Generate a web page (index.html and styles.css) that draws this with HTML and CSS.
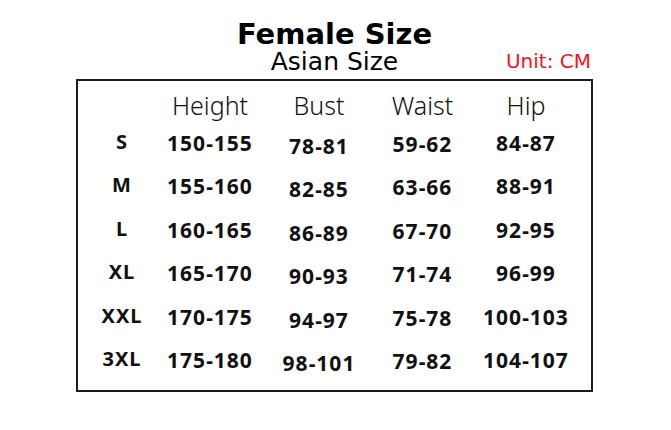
FILE: index.html
```html
<!DOCTYPE html>
<html lang="en">
<head>
<meta charset="utf-8">
<title>Female Size</title>
<link rel="stylesheet" href="styles.css">
</head>
<body>
<main class="page">
  <header class="head">
    <h1 class="title">Female Size</h1>
    <div class="subrow">
      <span class="spacer"></span>
      <h2 class="subtitle">Asian Size</h2>
      <span class="unit">Unit: CM</span>
    </div>
  </header>
  <section class="chart">
    <div class="grid">
      <div class="hd"></div>
      <div class="hd">Height</div>
      <div class="hd">Bust</div>
      <div class="hd">Waist</div>
      <div class="hd">Hip</div>

      <div class="sz">S</div>
      <div class="v">150-155</div>
      <div class="v bust">78-81</div>
      <div class="v waist">59-62</div>
      <div class="v">84-87</div>

      <div class="sz">M</div>
      <div class="v">155-160</div>
      <div class="v bust">82-85</div>
      <div class="v waist">63-66</div>
      <div class="v">88-91</div>

      <div class="sz">L</div>
      <div class="v">160-165</div>
      <div class="v bust">86-89</div>
      <div class="v waist">67-70</div>
      <div class="v">92-95</div>

      <div class="sz">XL</div>
      <div class="v">165-170</div>
      <div class="v bust">90-93</div>
      <div class="v waist">71-74</div>
      <div class="v">96-99</div>

      <div class="sz">XXL</div>
      <div class="v">170-175</div>
      <div class="v bust">94-97</div>
      <div class="v waist">75-78</div>
      <div class="v">100-103</div>

      <div class="sz">3XL</div>
      <div class="v">175-180</div>
      <div class="v bust">98-101</div>
      <div class="v waist">79-82</div>
      <div class="v">104-107</div>
    </div>
  </section>
</main>
</body>
</html>
```

FILE: styles.css
```css
* { box-sizing: border-box; }
html, body { margin: 0; padding: 0; background: #fff; }
.page {
  width: 671px;
  height: 430px;
  padding: 19px 0 0 76px;
  color: #000;
}
.head { width: 517px; }
.title {
  margin: 0;
  font-family: "DejaVu Sans", sans-serif;
  font-weight: 700;
  font-size: 29px;
  line-height: 30px;
  text-align: center;
  color: #000;
}
.subrow {
  display: grid;
  grid-template-columns: 1fr auto 1fr;
  align-items: end;
}
.subtitle {
  margin: 0;
  font-family: "DejaVu Sans", sans-serif;
  font-weight: 400;
  font-size: 25px;
  line-height: 25px;
  color: #000;
}
.unit {
  justify-self: end;
  padding-right: 2px;
  font-family: "DejaVu Sans", sans-serif;
  font-size: 20px;
  line-height: 25px;
  color: #f2141c;
}
.chart {
  margin-top: 5px;
  width: 517px;
  height: 313px;
  border: 2px solid #1c1c1c;
  padding: 7px 0 0 0;
}
.grid {
  display: grid;
  grid-template-columns: 88px 88px 130px 77px 130px;
  grid-template-rows: 34px;
  grid-auto-rows: 43.4px;
  text-align: center;
  font-family: "Noto Sans", sans-serif;
  color: #111;
}
.hd {
  font-size: 25px;
  line-height: 34px;
  font-weight: 300;
  white-space: nowrap;
}
.v {
  font-size: 21px;
  line-height: 43.4px;
  font-weight: 700;
  letter-spacing: 1px;
  white-space: nowrap;
}
.bust { padding-top: 3px; }
.waist { padding-top: 1px; }
.sz {
  font-size: 20px;
  line-height: 39.4px;
  font-weight: 700;
  letter-spacing: 1px;
  white-space: nowrap;
}
```
